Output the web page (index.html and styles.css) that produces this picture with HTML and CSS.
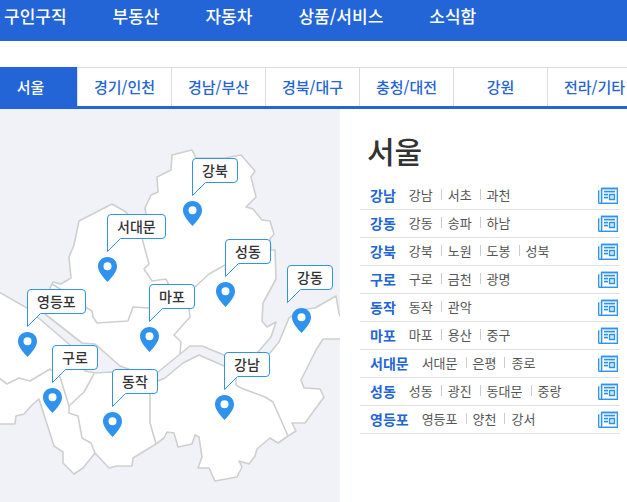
FILE: index.html
```html
<!DOCTYPE html>
<html lang="ko">
<head>
<meta charset="utf-8">
<meta name="viewport" content="width=device-width, initial-scale=1">
<title>서울</title>
<link rel="stylesheet" href="styles.css">
</head>
<body>
<svg class="defs" width="0" height="0" aria-hidden="true">
  <symbol id="pin" viewBox="0 0 19 25">
    <path fill="#2f93ee" fill-rule="evenodd" d="M9.5 0C4 0 0 4 0 9.3C0 14.500 4.500 19.500 9.500 25C14.500 19.500 19 14.500 19 9.300C19 4 15 0 9.500 0ZM9.500 5.200A4 4 0 1 1 9.500 13.200A4 4 0 1 1 9.500 5.200Z"/>
  </symbol>
  <symbol id="tail" viewBox="0 0 14 14">
    <path fill="#fff" d="M1 0H14L1 13Z"/>
    <path fill="none" stroke="#2f93ee" d="M0.500 0V13.500L13.500 0.500"/>
  </symbol>
  <symbol id="paper" viewBox="0 0 20 17">
    <path fill="#c9e4fb" d="M0 3h3V0h17v17H0Z"/>
    <path fill="#fff" d="M5 3h13v12H5ZM2 4h1v11H2Z"/>
    <path fill="#c9e4fb" d="M6 5h11v1H6ZM6 8h4v1H6ZM6 11h4v1H6ZM12 8h4v4h-4Z"/>
    <path fill="none" stroke="#2f93ee" stroke-width="1.300" d="M3.500 16V1.500H19.500V16.500H1.500L0.500 15.500V3.500"/>
    <path fill="none" stroke="#2f93ee" stroke-width="1.300" d="M6 4.500H17M6 7.500H10M6 10.500H10M11.500 7.500H16.500V12.500H11.500Z"/>
  </symbol>
</svg>

<nav class="menu">
  <a href="#">구인구직</a>
  <a href="#">부동산</a>
  <a href="#">자동차</a>
  <a href="#">상품/서비스</a>
  <a href="#">소식함</a>
</nav>

<nav class="tabs">
  <a class="tab active" href="#">서울</a>
  <a class="tab" href="#">경기/인천</a>
  <a class="tab" href="#">경남/부산</a>
  <a class="tab" href="#">경북/대구</a>
  <a class="tab" href="#">충청/대전</a>
  <a class="tab" href="#">강원</a>
  <a class="tab" href="#">전라/기타</a>
</nav>

<main class="content">
  <section class="map">
    <svg class="land" viewBox="0 109 340 393" aria-hidden="true">
      <g fill="#fff" stroke="#cfcfcf" stroke-width="1.600" stroke-linejoin="round">
        <path d="M53 282L61 284L71 278L69 257L74 245L79 221L112 204L126 212L142 238L148 225L145 208L151 195L158 192L157 177L171 170L172 155L192 150L196 158H225L241 155L255 171L251 177L256 197L246 207L253 209L262 220L270 221L274 234L270 239L271 250H275L276 279L263 303L262 321L267 327L276 322L271 337L258 352L240 362L224 355L202 346H190L158 372L140 373L120 366L95 344L82 343L45 314L50 288Z"/>
        <path d="M-3 291L27 308L70 345L85 371L95 373L112 372L140 383L158 381L165 378L183 363L199 355L224 366L250 373L270 353L279 342L289 318L300 310L315 308L336 296L339 313L343 324V339H323L316 350L301 380L304 388L320 389L324 397L305 423H292L296 431L288 436L278 443L270 438L257 449L255 456L249 464L239 461L242 467L237 477L215 481L209 468H198L202 457L199 437L195 435L192 444L178 447L174 433L167 432L164 438L156 444L133 458L132 466H117L109 468L95 453L83 468L74 474L63 463V452L54 446L39 399L32 405L24 414L16 416L15 424H-3Z"/>
      </g>
      <g fill="none" stroke="#cfcfcf" stroke-width="1.600" stroke-linejoin="round">
        <path d="M142 238L149 264L144 269L152 281L166 279L169 285L189 308L190 317L174 335L181 342L180 354"/>
        <path d="M52 284L60 289L87 308L92 311L93 317L97 323L128 321L133 307L149 308M190 292L195 287L209 274L225 265L271 250"/>
        <path d="M-1 378L7 384L19 378L30 381L50 369L60 377L69 406V413L78 416L82 438L91 443L95 453"/>
        <path d="M69 406L84 392L94 374M150 382V423L156 444M236 370V385L241 388L265 397L273 402L288 436"/>
      </g>
    </svg>
    <a class="place gangbuk" href="#"><span>강북</span><svg class="tail"><use href="#tail"/></svg><svg class="pin"><use href="#pin"/></svg></a>
    <a class="place seodaemun" href="#"><span>서대문</span><svg class="tail"><use href="#tail"/></svg><svg class="pin"><use href="#pin"/></svg></a>
    <a class="place seongdong" href="#"><span>성동</span><svg class="tail"><use href="#tail"/></svg><svg class="pin"><use href="#pin"/></svg></a>
    <a class="place gangdong" href="#"><span>강동</span><svg class="tail"><use href="#tail"/></svg><svg class="pin"><use href="#pin"/></svg></a>
    <a class="place yeongdeungpo" href="#"><span>영등포</span><svg class="tail"><use href="#tail"/></svg><svg class="pin"><use href="#pin"/></svg></a>
    <a class="place mapo" href="#"><span>마포</span><svg class="tail"><use href="#tail"/></svg><svg class="pin"><use href="#pin"/></svg></a>
    <a class="place guro" href="#"><span>구로</span><svg class="tail"><use href="#tail"/></svg><svg class="pin"><use href="#pin"/></svg></a>
    <a class="place dongjak" href="#"><span>동작</span><svg class="tail"><use href="#tail"/></svg><svg class="pin"><use href="#pin"/></svg></a>
    <a class="place gangnam" href="#"><span>강남</span><svg class="tail"><use href="#tail"/></svg><svg class="pin"><use href="#pin"/></svg></a>
  </section>

  <section class="areas">
    <h1>서울</h1>
    <ul class="rows">
      <li class="row"><a class="name" href="#">강남</a><span class="towns"><span>강남</span><span>서초</span><span>과천</span></span><a class="paper" href="#" aria-label="강남"><svg><use href="#paper"/></svg></a></li>
      <li class="row"><a class="name" href="#">강동</a><span class="towns"><span>강동</span><span>송파</span><span>하남</span></span><a class="paper" href="#" aria-label="강동"><svg><use href="#paper"/></svg></a></li>
      <li class="row"><a class="name" href="#">강북</a><span class="towns"><span>강북</span><span>노원</span><span>도봉</span><span>성북</span></span><a class="paper" href="#" aria-label="강북"><svg><use href="#paper"/></svg></a></li>
      <li class="row"><a class="name" href="#">구로</a><span class="towns"><span>구로</span><span>금천</span><span>광명</span></span><a class="paper" href="#" aria-label="구로"><svg><use href="#paper"/></svg></a></li>
      <li class="row"><a class="name" href="#">동작</a><span class="towns"><span>동작</span><span>관악</span></span><a class="paper" href="#" aria-label="동작"><svg><use href="#paper"/></svg></a></li>
      <li class="row"><a class="name" href="#">마포</a><span class="towns"><span>마포</span><span>용산</span><span>중구</span></span><a class="paper" href="#" aria-label="마포"><svg><use href="#paper"/></svg></a></li>
      <li class="row"><a class="name" href="#">서대문</a><span class="towns"><span>서대문</span><span>은평</span><span>종로</span></span><a class="paper" href="#" aria-label="서대문"><svg><use href="#paper"/></svg></a></li>
      <li class="row"><a class="name" href="#">성동</a><span class="towns"><span>성동</span><span>광진</span><span>동대문</span><span>중랑</span></span><a class="paper" href="#" aria-label="성동"><svg><use href="#paper"/></svg></a></li>
      <li class="row"><a class="name" href="#">영등포</a><span class="towns"><span>영등포</span><span>양천</span><span>강서</span></span><a class="paper" href="#" aria-label="영등포"><svg><use href="#paper"/></svg></a></li>
    </ul>
  </section>
</main>
</body>
</html>
```
FILE: styles.css
```css
* {
  box-sizing: border-box;
}

body {
  margin: 0;
  background: #fff;
  color: #333;
  font-family: "Noto Sans CJK KR", "Noto Sans", sans-serif;
}

a {
  color: inherit;
  text-decoration: none;
}

svg {
  display: block;
}

.defs {
  position: absolute;
}

.menu {
  display: flex;
  gap: 46px;
  padding: 4px 4px 13px;
  background: #2365d6;
  color: #fff;
  font-size: 17px;
  font-weight: 500;
  line-height: 24px;
  white-space: nowrap;
}

.tabs {
  display: flex;
  margin-top: 26px;
  border-bottom: 3px solid #2365d6;
  overflow: hidden;
  color: #2365d6;
  font-size: 15px;
  font-weight: 500;
  line-height: 38px;
  text-align: center;
  white-space: nowrap;
}

.tab {
  flex: 0 0 94px;
  border-top: 1px solid #dcdcdc;
  border-left: 1px solid #dcdcdc;
}

.tab.active {
  margin-left: -17px;
  border-color: #2365d6;
  background: #2365d6;
  color: #fff;
}

.content {
  display: flex;
}

.map {
  position: relative;
  flex: 0 0 340px;
  background: #f0f2f7;
}

.land {
  width: 100%;
}

/* Each place is anchored at the left top corner of its callout. */
.place {
  position: absolute;
}

.place span {
  display: block;
  height: 25px;
  padding: 0 9px;
  border: 1px solid #2f93ee;
  border-radius: 4px 4px 4px 0;
  background: #fff;
  font-size: 14px;
  font-weight: 500;
  line-height: 22px;
  white-space: nowrap;
}

.tail {
  position: absolute;
  top: 24px;
  left: 0;
  width: 14px;
  height: 14px;
}

.pin {
  position: absolute;
  top: 43px;
  left: -9px;
  width: 19px;
  height: 25px;
}

.gangbuk { left: 192px; top: 49px; }
.seodaemun { left: 107px; top: 105px; }
.seongdong { left: 225px; top: 130px; }
.gangdong { left: 287px; top: 156px; }
.yeongdeungpo { left: 27px; top: 180px; }
.mapo { left: 149px; top: 175px; }
.guro { left: 52px; top: 236px; }
.dongjak { left: 112px; top: 260px; }
.gangnam { left: 224px; top: 243px; }

.gangdong .pin {
  left: 5px;
}

.areas {
  flex: 1;
  min-width: 0;
  padding: 21px 7px 0 20px;
}

h1 {
  margin: 0;
  padding-left: 7px;
  color: #333;
  font-size: 30px;
  font-weight: 500;
  line-height: 40px;
}

.rows {
  margin: 12px 0 0;
  padding: 0;
  list-style: none;
}

.row {
  display: flex;
  align-items: center;
  height: 28px;
  padding: 0 2px 0 10px;
  border-bottom: 1px solid #e2e2e2;
  white-space: nowrap;
}

.name {
  margin-right: 13px;
  padding-bottom: 2px;
  color: #2365d6;
  font-size: 14px;
  font-weight: 700;
  line-height: 20px;
}

.towns {
  display: flex;
  align-items: center;
  padding-bottom: 2px;
  color: #555;
  font-size: 13px;
  line-height: 20px;
}

.towns span {
  display: flex;
  align-items: center;
}

.towns span + span::before {
  content: "";
  width: 1px;
  height: 11px;
  margin: 0 6px 0 8px;
  background: #ccc;
}

.paper {
  margin-left: auto;
}

.paper svg {
  width: 20px;
  height: 17px;
}
```
